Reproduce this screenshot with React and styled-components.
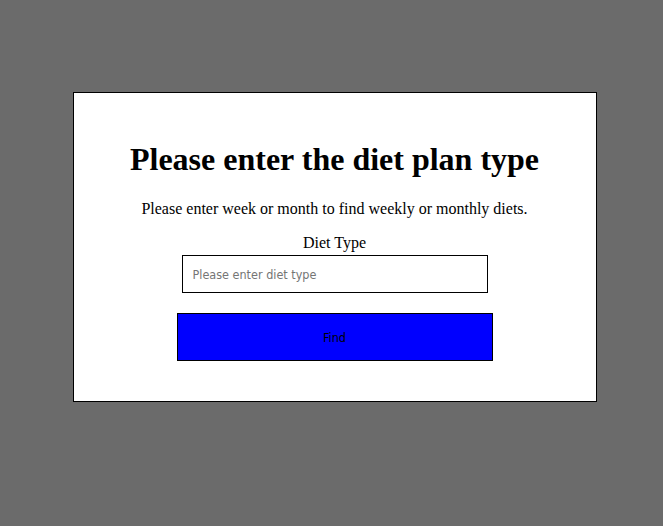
import React from 'react'
import styled, { createGlobalStyle } from 'styled-components'

const Global = createGlobalStyle`
  html, body {
    margin: 0;
    padding: 0;
    background: #6b6b6b;
    font-family: "Liberation Serif", "Times New Roman", serif;
  }
`

const Overlay = styled.div`
  display: flex;
  justify-content: center;
  align-items: flex-start;
  width: 663px;
  height: 526px;
  box-sizing: border-box;
  padding: 92px 0 0 6px;
  background: #6b6b6b;
`

const Modal = styled.div`
  width: 524px;
  height: 310px;
  box-sizing: border-box;
  background: #fff;
  border: 1px solid #000;
  display: flex;
  flex-direction: column;
  align-items: center;
  text-align: center;
`

const Title = styled.h1`
  margin: 48px 0 0;
  font-size: 32px;
  line-height: 37px;
  font-weight: bold;
  color: #000;
`

const Tagline = styled.p`
  margin: 22px 0 0;
  font-size: 16px;
  line-height: 18px;
`

const Label = styled.label`
  margin-top: 16px;
  font-size: 16px;
  line-height: 18px;
`

const Input = styled.input`
  margin-top: 3px;
  width: 306px;
  height: 38px;
  box-sizing: border-box;
  border: 1px solid #000;
  padding: 0 10px;
  font-family: "DejaVu Sans Condensed", "DejaVu Sans", Tahoma, sans-serif;
  font-size: 12.5px;
  outline: none;
  &::placeholder {
    color: #757575;
  }
`

const Button = styled.button`
  margin-top: 20px;
  width: 316px;
  height: 48px;
  box-sizing: border-box;
  border: 1px solid #000;
  background: #0000ff;
  color: #000;
  font-family: "DejaVu Sans Condensed", "DejaVu Sans", Tahoma, sans-serif;
  font-size: 12.5px;
  cursor: pointer;
`

const App = () => {
  return (
    <>
      <Global />
      <Overlay>
        <Modal>
          <Title>Please enter the diet plan type</Title>
          <Tagline>Please enter week or month to find weekly or monthly diets.</Tagline>
          <Label htmlFor='dietType'>Diet Type</Label>
          <Input id='dietType' type='text' placeholder='Please enter diet type' />
          <Button>Find</Button>
        </Modal>
      </Overlay>
    </>
  )
}

export default App
